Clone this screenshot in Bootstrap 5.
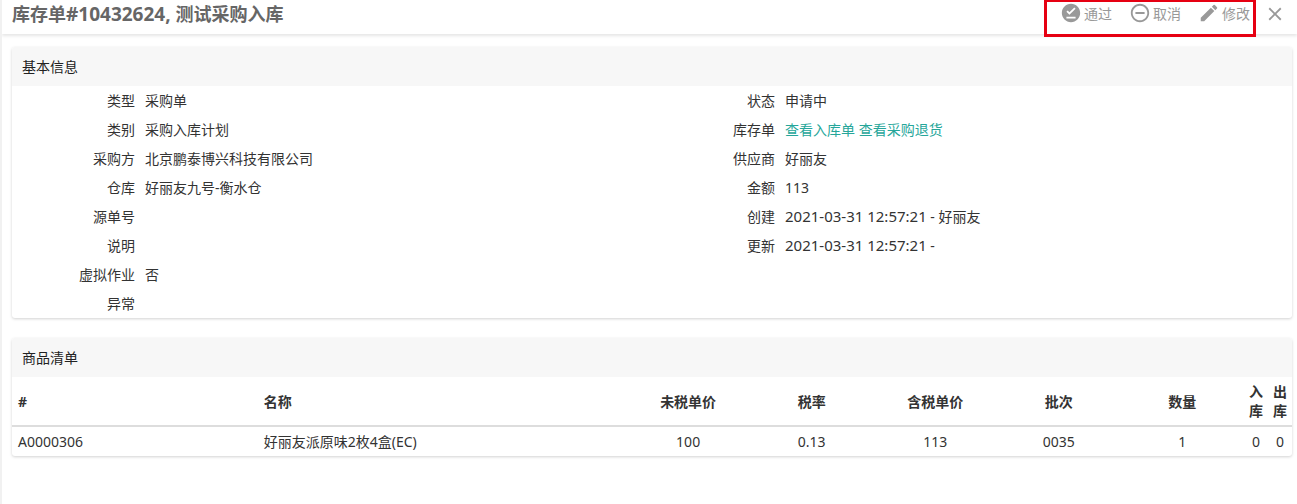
<!DOCTYPE html>
<html lang="zh-CN">
<head>
<meta charset="utf-8">
<meta name="viewport" content="width=device-width, initial-scale=1">
<title>库存单#10432624</title>
<link rel="stylesheet" href="https://cdn.jsdelivr.net/npm/bootstrap@5.3.0/dist/css/bootstrap.min.css">
<style>
  body {
    font-family: "Noto Sans", "Noto Sans CJK SC", sans-serif;
    font-size: 14px;
    line-height: 19px;
    color: #333;
    border-left: 2px solid #f1f1f1;
    background: #fff;
  }
  .page-head {
    height: 34px;
    padding: 0 11px 0 10px;
    box-shadow: 0 2px 3px rgba(0, 0, 0, .1);
  }
  .page-title {
    font-size: 18px;
    line-height: 28px;
    font-weight: 700;
    color: #666;
  }
  .doc-no { font-size: 19px; }
  .stamp { font-size: 15px; }
  .action-box {
    height: 38px;
    gap: 17px;
    margin-top: -1px;
    padding: 0 3px 0 13px;
    border: 3px solid #e60012;
    position: relative;
  }
  .tool-btn {
    display: flex;
    align-items: center;
    gap: 2px;
    height: 24px;
    padding: 0;
    border: 0;
    background: none;
    color: #999;
    white-space: nowrap;
  }
  .tool-btn svg { width: 22px; height: 22px; fill: currentColor; }
  .action-box .tool-btn { height: 22px; }
  .close-btn { height: 28px; }
  main { gap: 20px; padding: 13px 5px 20px 10px; }
  .panel {
    border: 0;
    border-radius: 3px;
    box-shadow: 0 1px 3px rgba(0, 0, 0, .18);
    overflow: hidden;
  }
  .panel-head {
    padding: 10px;
    font-size: 14px;
    line-height: 19px;
    font-weight: 400;
    color: #222;
    background: #f7f7f7;
  }
  .field dt { width: 133px; padding: 5px 10px 5px 0; font-weight: 400; text-align: right; }
  .field dd { padding: 5px 0; margin: 0; }
  .field a { color: #26a69a; text-decoration: none; }
  .goods { table-layout: fixed; --bs-table-color: #333; }
  .goods > :not(caption) > * > * { padding: 5px 6px; border: 0; text-align: center; }
  .goods > thead > tr > th { border-bottom: 2px solid #ddd; vertical-align: middle; }
  .goods > * > tr > :nth-child(-n+2) { text-align: left; }
  .goods > * > tr > :nth-child(n+8) { padding-left: 4px; padding-right: 4px; }
  .c-code { width: 19.2%; }
  .c-name { width: 28.8%; }
  .c-mid { width: 9.65%; }
  .c-tiny { width: 24px; }
</style>
</head>
<body class="min-vh-100">
<header class="page-head d-flex align-items-start">
  <h1 class="page-title mb-0 me-auto">库存单<span class="doc-no">#10432624, </span>测试采购入库</h1>
  <div class="d-flex align-items-start gap-2">
    <div class="action-box d-flex">
      <button type="button" class="tool-btn"><svg viewBox="0 0 24 24" aria-hidden="true"><path d="M12 2C6.5 2 2 6.5 2 12s4.5 10 10 10 10-4.5 10-10S17.5 2 12 2zm5 16H7v-2h10v2zm-6.7-4L7 10.7l1.4-1.4 1.9 1.9 5.3-5.3L17 7.3 10.3 14z"/></svg>通过</button>
      <button type="button" class="tool-btn"><svg viewBox="0 0 24 24" aria-hidden="true"><path d="M7 11v2h10v-2H7zm5-9C6.48 2 2 6.48 2 12s4.48 10 10 10 10-4.48 10-10S17.52 2 12 2zm0 18c-4.41 0-8-3.59-8-8s3.59-8 8-8 8 3.59 8 8-3.59 8-8 8z"/></svg>取消</button>
      <button type="button" class="tool-btn"><svg viewBox="0 0 24 24" aria-hidden="true"><path d="M3 17.25V21h3.75L17.81 9.94l-3.75-3.75L3 17.25zM20.71 7.04a1 1 0 0 0 0-1.41l-2.34-2.34a1 1 0 0 0-1.41 0l-1.83 1.83 3.75 3.75 1.83-1.83z"/></svg>修改</button>
    </div>
    <button type="button" class="tool-btn close-btn" aria-label="关闭"><svg viewBox="0 0 24 24" aria-hidden="true"><path d="M19 6.41L17.59 5 12 10.59 6.41 5 5 6.41 10.59 12 5 17.59 6.41 19 12 13.41 17.59 19 19 17.59 13.41 12z"/></svg></button>
  </div>
</header>

<main class="d-flex flex-column">
  <section class="card panel">
    <h2 class="panel-head mb-0">基本信息</h2>
    <div class="row g-0">
      <div class="col-6">
        <dl class="field d-flex mb-0"><dt>类型</dt><dd>采购单</dd></dl>
        <dl class="field d-flex mb-0"><dt>类别</dt><dd>采购入库计划</dd></dl>
        <dl class="field d-flex mb-0"><dt>采购方</dt><dd>北京鹏泰博兴科技有限公司</dd></dl>
        <dl class="field d-flex mb-0"><dt>仓库</dt><dd>好丽友九号-衡水仓</dd></dl>
        <dl class="field d-flex mb-0"><dt>源单号</dt><dd></dd></dl>
        <dl class="field d-flex mb-0"><dt>说明</dt><dd></dd></dl>
        <dl class="field d-flex mb-0"><dt>虚拟作业</dt><dd>否</dd></dl>
        <dl class="field d-flex mb-0"><dt>异常</dt><dd></dd></dl>
      </div>
      <div class="col-6">
        <dl class="field d-flex mb-0"><dt>状态</dt><dd>申请中</dd></dl>
        <dl class="field d-flex mb-0"><dt>库存单</dt><dd><a href="#">查看入库单</a> <a href="#">查看采购退货</a></dd></dl>
        <dl class="field d-flex mb-0"><dt>供应商</dt><dd>好丽友</dd></dl>
        <dl class="field d-flex mb-0"><dt>金额</dt><dd>113</dd></dl>
        <dl class="field d-flex mb-0"><dt>创建</dt><dd><span class="stamp">2021-03-31 12:57:21</span> - 好丽友</dd></dl>
        <dl class="field d-flex mb-0"><dt>更新</dt><dd><span class="stamp">2021-03-31 12:57:21</span> -</dd></dl>
      </div>
    </div>
  </section>

  <section class="card panel">
    <h2 class="panel-head mb-0">商品清单</h2>
    <table class="table goods mb-0">
      <colgroup>
        <col class="c-code"><col class="c-name">
        <col class="c-mid"><col class="c-mid"><col class="c-mid"><col class="c-mid"><col class="c-mid">
        <col class="c-tiny"><col class="c-tiny">
      </colgroup>
      <thead>
        <tr><th>#</th><th>名称</th><th>未税单价</th><th>税率</th><th>含税单价</th><th>批次</th><th>数量</th><th>入库</th><th>出库</th></tr>
      </thead>
      <tbody>
        <tr><td>A0000306</td><td>好丽友派原味2枚4盒(EC)</td><td>100</td><td>0.13</td><td>113</td><td>0035</td><td>1</td><td>0</td><td>0</td></tr>
      </tbody>
    </table>
  </section>
</main>
<script src="https://cdn.jsdelivr.net/npm/bootstrap@5.3.0/dist/js/bootstrap.bundle.min.js"></script>
</body>
</html>
